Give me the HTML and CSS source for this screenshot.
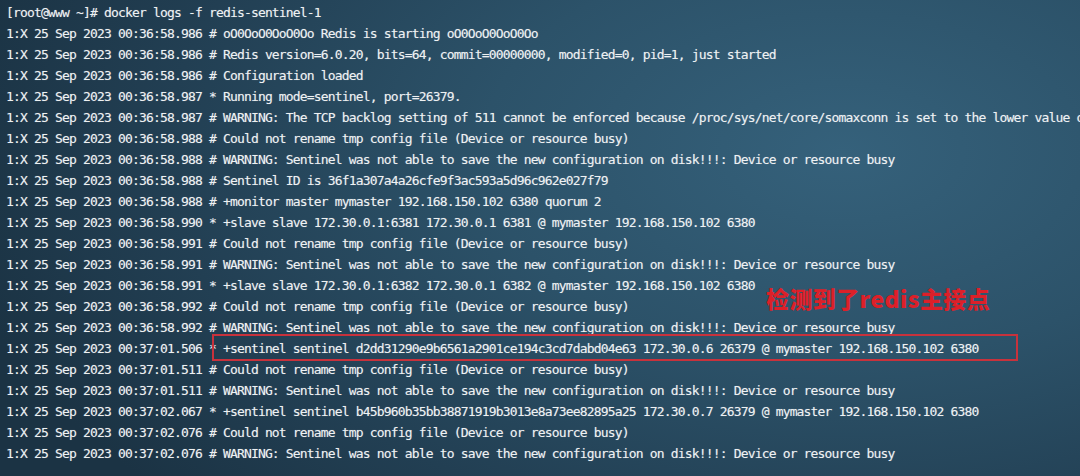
FILE: index.html
```html
<!DOCTYPE html>
<html lang="zh-CN">
<head>
  <meta charset="UTF-8">
  <title>docker logs redis-sentinel-1</title>
  <link rel="stylesheet" href="styles.css">
</head>
<body>

<div class="terminal">
<pre class="log">[root@www ~]# docker logs -f redis-sentinel-1
1:X 25 Sep 2023 00:36:58.986 # oO0OoO0OoO0Oo Redis is starting oO0OoO0OoO0Oo
1:X 25 Sep 2023 00:36:58.986 # Redis version=6.0.20, bits=64, commit=00000000, modified=0, pid=1, just started
1:X 25 Sep 2023 00:36:58.986 # Configuration loaded
1:X 25 Sep 2023 00:36:58.987 * Running mode=sentinel, port=26379.
1:X 25 Sep 2023 00:36:58.987 # WARNING: The TCP backlog setting of 511 cannot be enforced because /proc/sys/net/core/somaxconn is set to the lower value of 128.
1:X 25 Sep 2023 00:36:58.988 # Could not rename tmp config file (Device or resource busy)
1:X 25 Sep 2023 00:36:58.988 # WARNING: Sentinel was not able to save the new configuration on disk!!!: Device or resource busy
1:X 25 Sep 2023 00:36:58.988 # Sentinel ID is 36f1a307a4a26cfe9f3ac593a5d96c962e027f79
1:X 25 Sep 2023 00:36:58.988 # +monitor master mymaster 192.168.150.102 6380 quorum 2
1:X 25 Sep 2023 00:36:58.990 * +slave slave 172.30.0.1:6381 172.30.0.1 6381 @ mymaster 192.168.150.102 6380
1:X 25 Sep 2023 00:36:58.991 # Could not rename tmp config file (Device or resource busy)
1:X 25 Sep 2023 00:36:58.991 # WARNING: Sentinel was not able to save the new configuration on disk!!!: Device or resource busy
1:X 25 Sep 2023 00:36:58.991 * +slave slave 172.30.0.1:6382 172.30.0.1 6382 @ mymaster 192.168.150.102 6380
1:X 25 Sep 2023 00:36:58.992 # Could not rename tmp config file (Device or resource busy)
1:X 25 Sep 2023 00:36:58.992 # WARNING: Sentinel was not able to save the new configuration on disk!!!: Device or resource busy
1:X 25 Sep 2023 00:37:01.506 * +sentinel sentinel d2dd31290e9b6561a2901ce194c3cd7dabd04e63 172.30.0.6 26379 @ mymaster 192.168.150.102 6380
1:X 25 Sep 2023 00:37:01.511 # Could not rename tmp config file (Device or resource busy)
1:X 25 Sep 2023 00:37:01.511 # WARNING: Sentinel was not able to save the new configuration on disk!!!: Device or resource busy
1:X 25 Sep 2023 00:37:02.067 * +sentinel sentinel b45b960b35bb38871919b3013e8a73ee82895a25 172.30.0.7 26379 @ mymaster 192.168.150.102 6380
1:X 25 Sep 2023 00:37:02.076 # Could not rename tmp config file (Device or resource busy)
1:X 25 Sep 2023 00:37:02.076 # WARNING: Sentinel was not able to save the new configuration on disk!!!: Device or resource busy</pre>

  <!-- annotations drawn over the log -->
  <div class="note">检测到了redis主接点</div>
  <div class="mark"></div>
</div>

</body>
</html>
```

FILE: styles.css
```css
* {
  margin: 0;
  padding: 0;
  box-sizing: border-box;
}

html, body {
  width: 1080px;
  height: 476px;
  overflow: hidden;
}

body {
  background: radial-gradient(ellipse 900px 520px at 78% 32%, #35617b 0%, #2c5269 40%, #223f53 75%, #1b3344 100%);
}

.terminal {
  position: relative;
  width: 1080px;
  height: 476px;
  overflow: hidden;
}

.log {
  padding: 2px 0 0 6px;
  font-family: "DejaVu Sans Mono", monospace;
  font-size: 13px;
  letter-spacing: -0.83px;
  line-height: 21px;
  color: #eef1f3;
  white-space: pre;
  text-shadow: 0 0 1px rgba(255, 255, 255, 0.35);
}

.note {
  position: absolute;
  left: 766px;
  top: 283px;
  font-family: "Noto Sans CJK SC", sans-serif;
  font-size: 23px;
  font-weight: 900;
  line-height: 30px;
  color: #dc2029;
  letter-spacing: 0.4px;
}

.mark {
  position: absolute;
  left: 212px;
  top: 334px;
  width: 806px;
  height: 27px;
  border: 2px solid #c8323c;
}
```
